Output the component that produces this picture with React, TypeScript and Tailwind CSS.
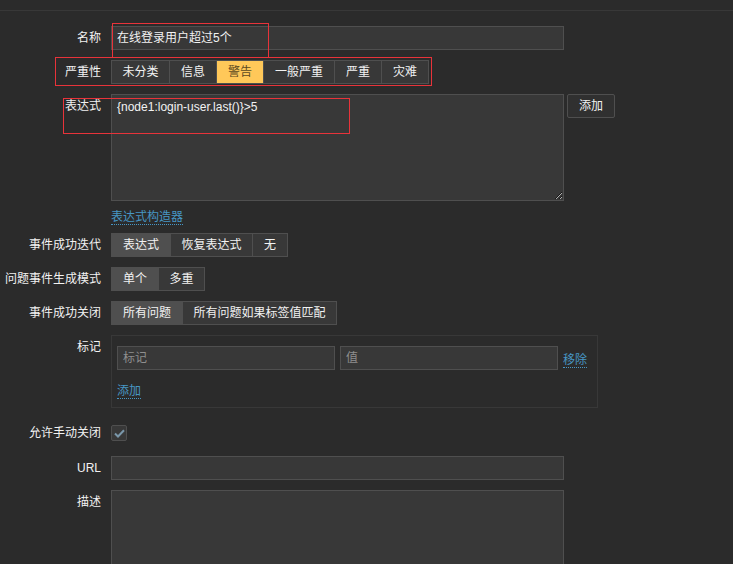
import React from "react";

const FONT = "font-['Liberation_Sans','Noto_Sans_CJK_SC',sans-serif]";

function Row({ label, children, className = "", align = "start" }: { label: string; children: React.ReactNode; className?: string; align?: "start" | "center" }) {
  return (
    <div className={`flex ${align === "center" ? "items-center" : "items-start"} ${className}`}>
      <div className="w-[101px] shrink-0 text-right leading-[24px] whitespace-nowrap">{label}</div>
      <div className="ml-[10px]">{children}</div>
    </div>
  );
}

type Seg = { t: string; w: string; active?: boolean; warn?: boolean };

function Segmented({ items }: { items: Seg[] }) {
  return (
    <div className="flex">
      {items.map((it, i) => (
        <div
          key={it.t}
          className={`${it.w} h-[24px] flex items-center justify-center border-y border-r border-[#4f4f4f] ${i === 0 ? "border-l" : ""} ${
            it.warn ? "bg-[#ffc859] text-[#5c4a22]" : it.active ? "bg-[#4f4f4f] text-[#f2f2f2]" : "bg-[#383838] text-[#f2f2f2]"
          } whitespace-nowrap`}
        >
          {it.t}
        </div>
      ))}
    </div>
  );
}

function Link({ children, className = "" }: { children: React.ReactNode; className?: string }) {
  return (
    <span className={`inline-block leading-[14px] text-[#4796c4] border-b border-dotted border-[#4796c4] ${className}`}>{children}</span>
  );
}

export default function App() {
  return (
    <div className={`relative w-[733px] h-[564px] overflow-hidden bg-[#2b2b2b] text-[12px] text-[#f2f2f2] ${FONT}`}>
      <div className="h-[11px] border-b border-[#383838]" />
      <div className="pt-[15px] flex flex-col">
        <Row label="名称">
          <div className="w-[453px] h-[24px] bg-[#383838] border border-[#4f4f4f] px-[5px] leading-[22px]">在线登录用户超过5个</div>
        </Row>

        <Row label="严重性" className="mt-[10px]">
          <Segmented
            items={[
              { t: "未分类", w: "w-[59px]" },
              { t: "信息", w: "w-[47px]" },
              { t: "警告", w: "w-[47px]", warn: true },
              { t: "一般严重", w: "w-[71px]" },
              { t: "严重", w: "w-[47px]" },
              { t: "灾难", w: "w-[47px]" },
            ]}
          />
        </Row>

        <Row label="表达式" className="mt-[10px]">
          <div className="flex items-start">
            <textarea
              readOnly
              value="{node1:login-user.last()}>5"
              className="block w-[453px] h-[107px] bg-[#383838] border border-[#4f4f4f] px-[5px] pt-[4px] leading-[16px] text-[#f2f2f2] outline-none resize-y"
            />
            <div className="ml-[3px] w-[48px] h-[24px] flex items-center justify-center bg-[#303030] border border-[#4f4f4f] rounded-[2px]">添加</div>
          </div>
          <div className="mt-[7px] h-[15px]">
            <Link>表达式构造器</Link>
          </div>
        </Row>

        <Row label="事件成功迭代" className="mt-[10px]">
          <Segmented
            items={[
              { t: "表达式", w: "w-[60px]", active: true },
              { t: "恢复表达式", w: "w-[82px]" },
              { t: "无", w: "w-[35px]" },
            ]}
          />
        </Row>

        <Row label="问题事件生成模式" className="mt-[10px]">
          <Segmented
            items={[
              { t: "单个", w: "w-[48px]", active: true },
              { t: "多重", w: "w-[46px]" },
            ]}
          />
        </Row>

        <Row label="事件成功关闭" className="mt-[10px]">
          <Segmented
            items={[
              { t: "所有问题", w: "w-[72px]", active: true },
              { t: "所有问题如果标签值匹配", w: "w-[154px]" },
            ]}
          />
        </Row>

        <Row label="标记" className="mt-[10px]">
          <div className="w-[487px] h-[73px] border border-[#383838] pt-[10px] px-[5px]">
            <div className="flex items-start">
              <div className="w-[218px] h-[24px] bg-[#383838] border border-[#4f4f4f] px-[5px] leading-[22px] text-[#8f8f8f]">标记</div>
              <div className="ml-[5px] w-[218px] h-[24px] bg-[#383838] border border-[#4f4f4f] px-[5px] leading-[22px] text-[#8f8f8f]">值</div>
              <div className="ml-[5px] mt-[5px]">
                <Link>移除</Link>
              </div>
            </div>
            <div className="mt-[12px]">
              <Link>添加</Link>
            </div>
          </div>
        </Row>

        <div className="flex items-center mt-[17px] h-[16px]">
          <div className="w-[101px] shrink-0 text-right leading-[16px] whitespace-nowrap">允许手动关闭</div>
          <div className="ml-[10px] w-[16px] h-[16px] bg-[#383838] border border-[#4f4f4f] rounded-[2px] flex items-center justify-center">
            <svg width="11" height="9" viewBox="0 0 11 9" fill="none">
              <path d="M1 4.5L4 7.5 10 1.2" stroke="#7a97aa" strokeWidth="2" />
            </svg>
          </div>
        </div>

        <Row label="URL" className="mt-[15px]">
          <div className="w-[453px] h-[24px] bg-[#383838] border border-[#4f4f4f]" />
        </Row>

        <Row label="描述" className="mt-[10px]">
          <div className="w-[453px] h-[107px] bg-[#383838] border border-[#4f4f4f]" />
        </Row>
      </div>

      {/* red annotation boxes */}
      <div className="absolute left-[112px] top-[23px] w-[157px] h-[35px] border border-[#e8333a] pointer-events-none" />
      <div className="absolute left-[55px] top-[57px] w-[377px] h-[29px] border border-[#e8333a] pointer-events-none" />
      <div className="absolute left-[63px] top-[98px] w-[287px] h-[36px] border border-[#e8333a] pointer-events-none" />
    </div>
  );
}
